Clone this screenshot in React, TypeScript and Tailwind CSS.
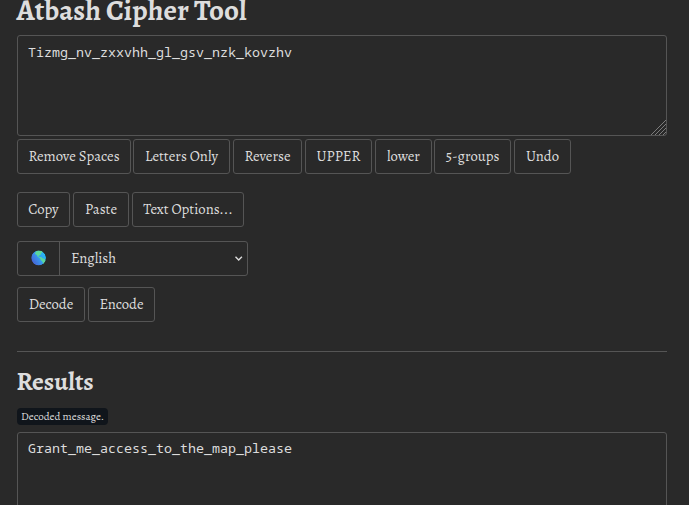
import React from "react";

type ButtonItem = { label: string; box: string };

const TEXT_TOOLS: ButtonItem[] = [
  { label: "Remove Spaces", box: "w-[114px]" },
  { label: "Letters Only", box: "w-[97px] ml-[2px]" },
  { label: "Reverse", box: "w-[69px] ml-[3px]" },
  { label: "UPPER", box: "w-[67px] ml-[3px]" },
  { label: "lower", box: "w-[57px] ml-[3px]" },
  { label: "5-groups", box: "w-[77px] ml-[2px]" },
  { label: "Undo", box: "w-[57px] ml-[3px]" },
];

const CLIPBOARD_TOOLS: ButtonItem[] = [
  { label: "Copy", box: "w-[53px]" },
  { label: "Paste", box: "w-[56px] ml-[3px]" },
  { label: "Text Options...", box: "w-[112px] ml-[3px]" },
];

const ACTIONS: ButtonItem[] = [
  { label: "Decode", box: "w-[68px]" },
  { label: "Encode", box: "w-[67px] ml-[3px]" },
];

function ButtonRow({ items, className = "" }: { items: ButtonItem[]; className?: string }) {
  return (
    <div className={`flex h-[35px] ${className}`}>
      {items.map((item) => (
        <button
          key={item.label}
          className={`h-[35px] shrink-0 whitespace-nowrap rounded-[3px] border border-[#555] text-center text-[14.7px] leading-[33px] ${item.box}`}
        >
          {item.label}
        </button>
      ))}
    </div>
  );
}

function Globe() {
  return (
    <svg width="16" height="16" viewBox="0 0 16 16" className="-mt-px" aria-hidden="true">
      <defs>
        <linearGradient id="sea" x1="1" y1="0.2" x2="0" y2="0.8">
          <stop offset="0" stopColor="#22c0f6" />
          <stop offset="0.5" stopColor="#3796ee" />
          <stop offset="1" stopColor="#4a5bd0" />
        </linearGradient>
        <clipPath id="disc">
          <circle cx="7.6" cy="8" r="7.4" />
        </clipPath>
      </defs>
      <g clipPath="url(#disc)">
        <circle cx="7.6" cy="8" r="7.4" fill="url(#sea)" />
        <path d="M4.6 2 6.4.4h5l.6 1.4-2 1.6-.5 1.6-2 .7.3 1.2 2.4.2 1.4 1.2 2.3.8.8 1.8-1.4 2.2-1.2 1-.6-2.4-1.8-1.6-.4-1.6-2.6-1.8-1-1.9-1.7-.8z" fill="#5bd79b" />
      </g>
    </svg>
  );
}

export default function App() {
  return (
    <main className="h-[505px] w-[689px] overflow-hidden bg-[#292929] pl-[17px] pr-[22px] font-['Alegreya','Liberation_Serif',serif] text-[#ddd]">
      <h1 className="-ml-[0.5px] h-[35px] whitespace-nowrap text-[29.1px] font-bold leading-[20px]">
        Atbash Cipher Tool
      </h1>
      <div className="relative h-[101px] rounded-[3px] border border-[#555] px-[10px] pt-[6px] font-['Noto_Sans_Mono','DejaVu_Sans_Mono',monospace] text-[13.33px] leading-[20px]">
        Tizmg_nv_zxxvhh_gl_gsv_nzk_kovzhv
        <svg className="absolute bottom-0 right-0" width="15" height="15" viewBox="0 0 15 15" stroke="#929292" strokeWidth="0.8" aria-hidden="true">
          <path d="M0 15 15 0M4 15 15 4M8 15l7-7M12 15l3-3" />
        </svg>
      </div>
      <ButtonRow items={TEXT_TOOLS} className="mt-[3px]" />
      <ButtonRow items={CLIPBOARD_TOOLS} className="mt-[18px]" />
      <div className="mt-[14px] flex h-[35px] w-[231px] rounded-[3px] border border-[#555]">
        <div className="flex w-[42px] items-center justify-center border-r border-[#555]">
          <Globe />
        </div>
        <div className="flex flex-1 items-center justify-between pl-[11px] pr-[4px] text-[14.7px] leading-[33px]">
          <span>English</span>
          <svg width="9" height="7" viewBox="0 0 9 7" fill="none" stroke="#ddd" strokeWidth="1.4" aria-hidden="true">
            <path d="m1.5 1.7 3.2 3.2 3.2-3.2" />
          </svg>
        </div>
      </div>
      <ButtonRow items={ACTIONS} className="mt-[11px]" />
      <hr className="mt-[29px] border-[#555]" />
      <h2 className="-ml-[0.5px] mt-[13px] h-[34px] text-[25.5px] font-bold leading-[34px]">Results</h2>
      <div className="mt-[9px] h-[17px] w-[91px] whitespace-nowrap rounded-[4px] bg-[#10151b] pl-[4px] text-[11px] leading-[17px]">
        Decoded message.
      </div>
      <div className="mt-[7px] h-[101px] rounded-[3px] border border-[#555] px-[10px] pt-[5px] font-['Noto_Sans_Mono','DejaVu_Sans_Mono',monospace] text-[13.33px] leading-[20px]">
        Grant_me_access_to_the_map_please
      </div>
    </main>
  );
}
